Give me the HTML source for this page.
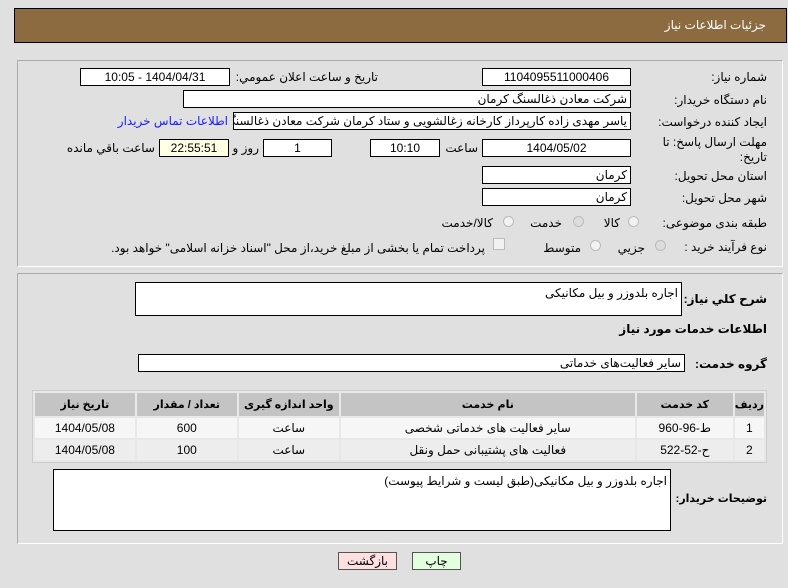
<!DOCTYPE html>
<html><head><meta charset="utf-8"><style>
body{margin:0;width:788px;height:588px;background:#e0e0e0;font-family:"Liberation Sans","DejaVu Sans",sans-serif;font-size:12px;color:#000;position:relative;overflow:hidden;direction:rtl}
.a{position:absolute;white-space:nowrap}
.box{position:absolute;background:#fff;border:1px solid #000;box-sizing:border-box;font-size:12px;line-height:16px;padding:0 3px;white-space:nowrap;overflow:hidden}
.c{text-align:center}
.lbl{position:absolute;right:21px;font-size:12px;white-space:nowrap}
.panel{position:absolute;left:17px;width:766px;border:1px solid #aaa;border-right-color:#fff;border-bottom-color:#fff;box-sizing:border-box}
.rad{position:absolute;width:11px;height:11px;border-radius:50%;border:1px solid #bbb;background:#f2f2f2;box-sizing:border-box}
table{border-collapse:separate;border-spacing:2px;background:#e8e8e8;border:1px solid #ccc}
td,th{text-align:center;font-size:12px;padding:0}
th{background:#c4c4c4;height:23px;font-size:11px}
b{font-weight:bold}
</style></head><body>
<div class="a" style="left:14px;top:8px;width:773px;height:35px;background:#8c6b41;border:1px solid #000;box-sizing:border-box"></div>
<div class="a" style="right:22px;top:18px;color:#fff;font-size:12px">جزئیات اطلاعات نیاز</div>

<div class="panel" style="top:60px;height:207px"></div>
<div class="lbl" style="top:70px">شماره نیاز:</div>
<div class="box c" style="left:482px;top:68px;width:149px;height:18px">1104095511000406</div>
<div class="a" style="right:410px;top:70px">تاريخ و ساعت اعلان عمومي:</div>
<div class="box c" style="left:80px;top:68px;width:150px;height:18px">1404/04/31 - 10:05</div>
<div class="lbl" style="top:93px">نام دستگاه خریدار:</div>
<div class="box" style="left:183px;top:90px;width:448px;height:18px">شرکت معادن ذغالسنگ کرمان</div>
<div class="lbl" style="top:115px">ایجاد کننده درخواست:</div>
<div class="box" style="left:233px;top:112px;width:398px;height:18px">یاسر مهدی زاده کارپرداز کارخانه زغالشویی و ستاد کرمان شرکت معادن ذغالسنگ کرمان</div>
<div class="a" style="right:560px;top:114px;color:#1a1aff">اطلاعات تماس خریدار</div>
<div class="lbl" style="top:135px;line-height:15px;white-space:normal;width:110px">مهلت ارسال پاسخ: تا تاریخ:</div>
<div class="box c" style="left:482px;top:139px;width:149px;height:18px">1404/05/02</div>
<div class="a" style="right:310px;top:141px">ساعت</div>
<div class="box c" style="left:370px;top:139px;width:70px;height:18px">10:10</div>
<div class="box c" style="left:263px;top:139px;width:69px;height:18px">1</div>
<div class="a" style="right:529px;top:141px">روز و</div>
<div class="box c" style="left:159px;top:139px;width:70px;height:18px;background:#ffffe4">22:55:51</div>
<div class="a" style="right:633px;top:141px">ساعت باقي مانده</div>
<div class="lbl" style="top:169px">استان محل تحویل:</div>
<div class="box" style="left:482px;top:166px;width:149px;height:18px">کرمان</div>
<div class="lbl" style="top:191px">شهر محل تحویل:</div>
<div class="box" style="left:482px;top:188px;width:149px;height:18px">کرمان</div>
<div class="lbl" style="top:216px">طبقه بندی موضوعی:</div>
<div class="rad" style="left:628px;top:216px"></div><div class="a" style="right:168px;top:216px">کالا</div>
<div class="rad" style="left:573px;top:216px;background:#ddd"></div><div class="a" style="right:226px;top:216px">خدمت</div>
<div class="rad" style="left:503px;top:216px"></div><div class="a" style="right:295px;top:216px">کالا/خدمت</div>
<div class="lbl" style="top:240px">نوع فرآیند خرید :</div>
<div class="rad" style="left:655px;top:240px;background:#ddd"></div><div class="a" style="right:143px;top:241px">جزیي</div>
<div class="rad" style="left:590px;top:240px"></div><div class="a" style="right:207px;top:241px">متوسط</div>
<div class="a" style="left:493px;top:238px;width:12px;height:12px;border:1px solid #bbb;background:#f2f2f2;box-sizing:border-box"></div>
<div class="a" style="right:303px;top:241px">پرداخت تمام یا بخشی از مبلغ خرید،از محل "اسناد خزانه اسلامی" خواهد بود.</div>

<div class="panel" style="top:273px;height:271px"></div>
<div class="lbl" style="top:292px"><b>شرح کلي نیاز:</b></div>
<div class="box" style="left:135px;top:282px;width:547px;height:34px;line-height:20px">اجاره بلدوزر و بیل مکانیکی</div>
<div class="lbl" style="top:322px"><b>اطلاعات خدمات مورد نیاز</b></div>
<div class="lbl" style="top:357px"><b>گروه خدمت:</b></div>
<div class="box" style="left:138px;top:354px;width:547px;height:18px">سایر فعالیت‌های خدماتی</div>
<table class="a" style="left:32px;top:390px;width:735px;direction:rtl">
<tr><th style="width:24px">ردیف</th><th style="width:96px">کد خدمت</th><th style="width:294px">نام خدمت</th><th style="width:100px">واحد اندازه گیری</th><th style="width:100px">تعداد / مقدار</th><th>تاریخ نیاز</th></tr>
<tr style="background:#f6f6f6;height:20px"><td>1</td><td>ط-96-960</td><td>سایر فعالیت های خدماتی شخصی</td><td>ساعت</td><td>600</td><td>1404/05/08</td></tr>
<tr style="background:#ededed;height:20px"><td>2</td><td>ح-52-522</td><td>فعالیت های پشتیبانی حمل ونقل</td><td>ساعت</td><td>100</td><td>1404/05/08</td></tr>
</table>
<div class="lbl" style="top:492px;font-size:11px"><b>توضیحات خریدار:</b></div>
<div class="box" style="left:53px;top:469px;width:618px;height:62px;line-height:22px">اجاره بلدوزر و بیل مکانیکی(طبق لیست و شرایط پیوست)</div>
<div class="box c" style="left:338px;top:552px;width:59px;height:18px;background:#ffe0e0;border-color:#555">بازگشت</div>
<div class="box c" style="left:412px;top:552px;width:49px;height:18px;background:#e4ffe0;border-color:#555">چاپ</div>
</body></html>
